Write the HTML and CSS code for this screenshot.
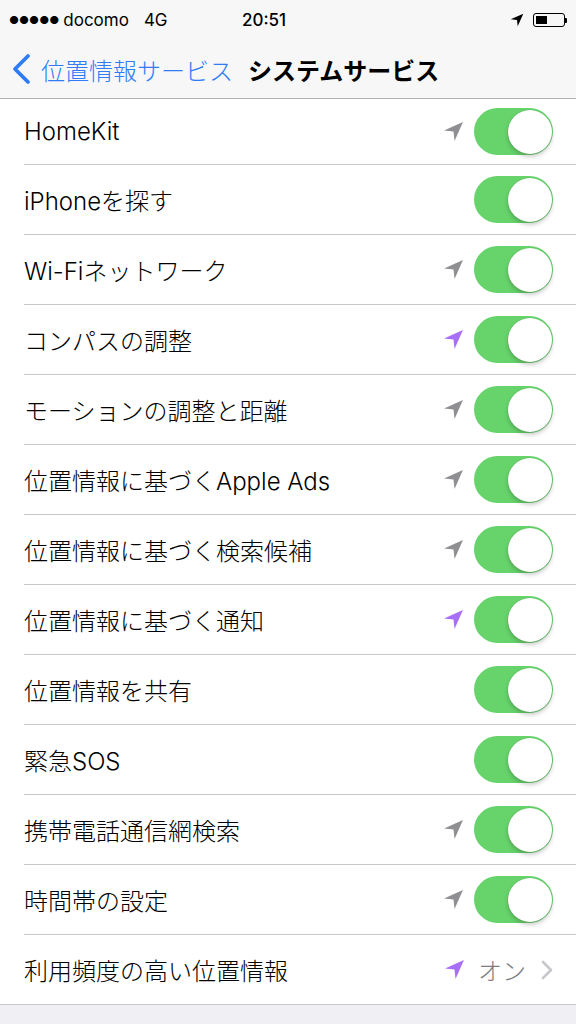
FILE: index.html
```html
<!DOCTYPE html>
<html lang="ja">
<head>
  <meta charset="UTF-8">
  <meta name="viewport" content="width=device-width, initial-scale=1.0">
  <title>システムサービス</title>
  <link rel="stylesheet" href="styles.css">
</head>
<body>
  <div class="status-bar">
    <div class="status-left">
      <span class="signal">●●●●●</span>
      <span class="carrier">docomo</span>
      <span class="net">4G</span>
    </div>
    <div class="status-time">20:51</div>
    <div class="status-right">
      <svg class="status-arrow" width="14" height="14" viewBox="0 0 20 20"><path d="M19 1 L1 9 L10 10 L11 19 Z" fill="#000"/></svg>
      <div class="battery"><div class="battery-level"></div></div>
      <div class="battery-nub"></div>
    </div>
  </div>

  <header class="nav-bar">
    <a class="back" href="#">
      <svg width="22" height="32" viewBox="0 0 22 32"><path d="M17 3 L4 16 L17 29" fill="none" stroke="#2f7cf6" stroke-width="3.8" stroke-linecap="round" stroke-linejoin="round"/></svg>
      <span>位置情報サービス</span>
    </a>
    <h1 class="nav-title">システムサービス</h1>
  </header>

  <section class="list">
    <div class="row row-first">
      <div class="row-inner">
        <span class="label">HomeKit</span>
        <div class="accessory">
          <svg class="loc gray" viewBox="0 0 20 20"><path d="M19 1 L1 9 L10 10 L11 19 Z"/></svg>
          <div class="toggle"><div class="knob"></div></div>
        </div>
      </div>
    </div>
    <div class="row">
      <div class="row-inner">
        <span class="label">iPhoneを探す</span>
        <div class="accessory">
          <div class="toggle"><div class="knob"></div></div>
        </div>
      </div>
    </div>
    <div class="row">
      <div class="row-inner">
        <span class="label">Wi-Fiネットワーク</span>
        <div class="accessory">
          <svg class="loc gray" viewBox="0 0 20 20"><path d="M19 1 L1 9 L10 10 L11 19 Z"/></svg>
          <div class="toggle"><div class="knob"></div></div>
        </div>
      </div>
    </div>
    <div class="row">
      <div class="row-inner">
        <span class="label">コンパスの調整</span>
        <div class="accessory">
          <svg class="loc purple" viewBox="0 0 20 20"><path d="M19 1 L1 9 L10 10 L11 19 Z"/></svg>
          <div class="toggle"><div class="knob"></div></div>
        </div>
      </div>
    </div>
    <div class="row">
      <div class="row-inner">
        <span class="label">モーションの調整と距離</span>
        <div class="accessory">
          <svg class="loc gray" viewBox="0 0 20 20"><path d="M19 1 L1 9 L10 10 L11 19 Z"/></svg>
          <div class="toggle"><div class="knob"></div></div>
        </div>
      </div>
    </div>
    <div class="row">
      <div class="row-inner">
        <span class="label">位置情報に基づくApple Ads</span>
        <div class="accessory">
          <svg class="loc gray" viewBox="0 0 20 20"><path d="M19 1 L1 9 L10 10 L11 19 Z"/></svg>
          <div class="toggle"><div class="knob"></div></div>
        </div>
      </div>
    </div>
    <div class="row">
      <div class="row-inner">
        <span class="label">位置情報に基づく検索候補</span>
        <div class="accessory">
          <svg class="loc gray" viewBox="0 0 20 20"><path d="M19 1 L1 9 L10 10 L11 19 Z"/></svg>
          <div class="toggle"><div class="knob"></div></div>
        </div>
      </div>
    </div>
    <div class="row">
      <div class="row-inner">
        <span class="label">位置情報に基づく通知</span>
        <div class="accessory">
          <svg class="loc purple" viewBox="0 0 20 20"><path d="M19 1 L1 9 L10 10 L11 19 Z"/></svg>
          <div class="toggle"><div class="knob"></div></div>
        </div>
      </div>
    </div>
    <div class="row">
      <div class="row-inner">
        <span class="label">位置情報を共有</span>
        <div class="accessory">
          <div class="toggle"><div class="knob"></div></div>
        </div>
      </div>
    </div>
    <div class="row">
      <div class="row-inner">
        <span class="label">緊急SOS</span>
        <div class="accessory">
          <div class="toggle"><div class="knob"></div></div>
        </div>
      </div>
    </div>
    <div class="row">
      <div class="row-inner">
        <span class="label">携帯電話通信網検索</span>
        <div class="accessory">
          <svg class="loc gray" viewBox="0 0 20 20"><path d="M19 1 L1 9 L10 10 L11 19 Z"/></svg>
          <div class="toggle"><div class="knob"></div></div>
        </div>
      </div>
    </div>
    <div class="row">
      <div class="row-inner">
        <span class="label">時間帯の設定</span>
        <div class="accessory">
          <svg class="loc gray" viewBox="0 0 20 20"><path d="M19 1 L1 9 L10 10 L11 19 Z"/></svg>
          <div class="toggle"><div class="knob"></div></div>
        </div>
      </div>
    </div>
    <div class="row row-last">
      <div class="row-inner">
        <span class="label">利用頻度の高い位置情報</span>
        <div class="accessory">
          <svg class="loc purple" viewBox="0 0 20 20"><path d="M19 1 L1 9 L10 10 L11 19 Z"/></svg>
          <span class="detail">オン</span>
          <svg class="chevron" width="14" height="22" viewBox="0 0 14 22"><path d="M3 3 L11 11 L3 19" fill="none" stroke="#c7c7cc" stroke-width="2.6" stroke-linecap="round" stroke-linejoin="round"/></svg>
        </div>
      </div>
    </div>
  </section>
</body>
</html>
```

FILE: styles.css
```css
body {
  margin: 0;
  padding: 0;
  background-color: #efeff4;
  font-family: Inter, "Noto Sans CJK JP", sans-serif;
  color: #000;
}

/* status bar */
.status-bar {
  height: 40px;
  background-color: #f7f7f8;
  display: flex;
  align-items: center;
  font-size: 17px;
}

.status-left {
  width: 242px;
  padding-left: 9px;
  box-sizing: border-box;
  display: flex;
  align-items: center;
}

.signal {
  font-size: 11px;
  margin-right: 4px;
}

.net {
  margin-left: 15px;
}

.status-time {
  font-weight: 500;
}

.status-right {
  margin-left: auto;
  padding-right: 9px;
  display: flex;
  align-items: center;
}

.status-arrow {
  margin-right: 9px;
}

.battery {
  width: 32px;
  height: 14px;
  border: 1px solid #000;
  border-radius: 3px;
  padding: 2px;
  box-sizing: border-box;
}

.battery-level {
  width: 11px;
  height: 100%;
  background-color: #000;
}

.battery-nub {
  width: 2px;
  height: 5px;
  background-color: #000;
  border-radius: 0 1px 1px 0;
}

/* navigation bar */
.nav-bar {
  height: 58px;
  background-color: #f7f7f8;
  border-bottom: 1px solid #b2b2b2;
  display: flex;
  align-items: center;
  padding-left: 11px;
}

.back {
  display: flex;
  align-items: center;
  color: #2f7cf6;
  text-decoration: none;
  font-size: 24px;
  font-weight: 300;
}

.back svg {
  margin-right: 8px;
}

.nav-title {
  margin: 0 0 0 15px;
  font-size: 24px;
  font-weight: 700;
}

/* list */
.list {
  background-color: #fff;
  border-bottom: 1px solid #c8c7cc;
}

.row {
  padding-left: 24px;
}

.row-inner {
  height: 69px;
  border-bottom: 1px solid #c8c7cc;
  display: flex;
  align-items: center;
  justify-content: space-between;
  padding-right: 23px;
}

.row-first .row-inner {
  height: 65px;
}

.row-last .row-inner {
  border-bottom: none;
}

.label {
  font-size: 24px;
  font-weight: 300;
}

.accessory {
  display: flex;
  align-items: center;
}

.loc {
  width: 21px;
  height: 21px;
  margin-right: 10px;
}

.loc.gray {
  fill: #8e8e93;
}

.loc.purple {
  fill: #a86ef7;
}

.toggle {
  width: 79px;
  height: 47px;
  border-radius: 24px;
  background-color: #66d36b;
  display: flex;
  align-items: center;
  justify-content: flex-end;
  padding: 0 1.5px;
  box-sizing: border-box;
}

.knob {
  width: 44px;
  height: 44px;
  border-radius: 50%;
  background-color: #fff;
  box-shadow: 0 3px 4px rgba(0, 0, 0, 0.2), 0 0 1px rgba(0, 0, 0, 0.2);
}

.detail {
  font-size: 24px;
  font-weight: 300;
  color: #7d7d82;
  margin: 0 14px 0 3px;
}

.chevron {
  margin-right: -1px;
}
```
